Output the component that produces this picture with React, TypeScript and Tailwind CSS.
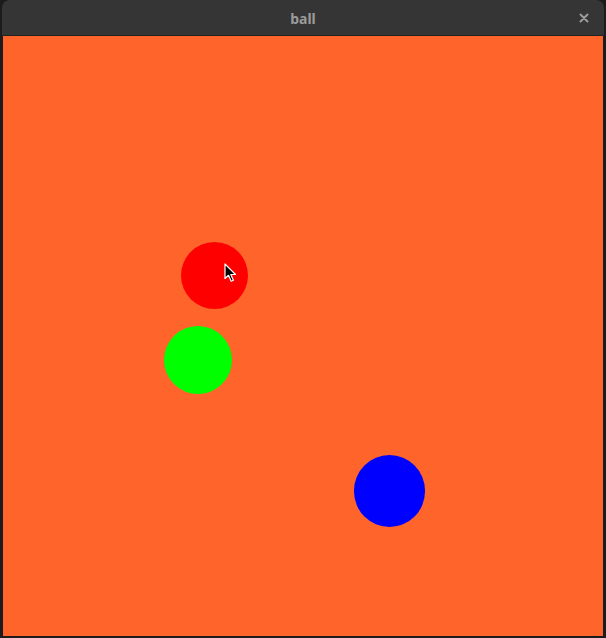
import React from "react";

const balls = [
  { id: "red", cls: "left-[178px] top-[206px] w-[67px] h-[67px] bg-[#ff0000]" },
  { id: "green", cls: "left-[161px] top-[290px] w-[68px] h-[68px] bg-[#00ff00]" },
  { id: "blue", cls: "left-[351px] top-[419px] w-[71px] h-[72px] bg-[#0000ff]" },
];

export default function App() {
  return (
    <div className="w-[606px] h-[638px] bg-[#1c1c1c] flex flex-col font-['Noto_Sans',sans-serif]">
      {/* title bar */}
      <div className="h-[36px] mx-[2px] rounded-t-[8px] bg-[#353535] border-b border-[#232323] flex items-center relative">
        <div className="flex-1 text-center text-[14px] font-bold text-[#9b9b9b] pt-[1px]">ball</div>
        <svg className="absolute right-[15px] top-[13px]" width="10" height="10" viewBox="0 0 10 10">
          <path d="M1.5 1.5 L8.5 8.5 M8.5 1.5 L1.5 8.5" stroke="#9b9b9b" strokeWidth="2" strokeLinecap="round" />
        </svg>
      </div>
      {/* canvas */}
      <div className="flex-1 ml-[3px] mr-[3px] mb-[2px] bg-[#ff642b] relative overflow-hidden">
        {balls.map((b) => (
          <div key={b.id} className={`absolute rounded-full ${b.cls}`} />
        ))}
        {/* mouse cursor */}
        <svg className="absolute left-[221px] top-[227px]" width="14" height="20" viewBox="0 0 14 20">
          <path d="M1 1 L1 15.5 L4.5 12.3 L7.2 18.3 L9.4 17.3 L6.8 11.5 L11.5 11.5 Z" fill="#000" stroke="#fff" strokeWidth="1.2" strokeLinejoin="round" />
        </svg>
      </div>
    </div>
  );
}
